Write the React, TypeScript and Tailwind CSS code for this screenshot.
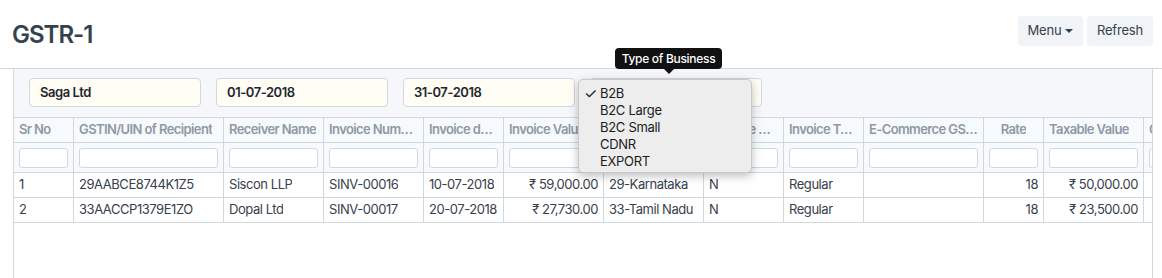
import React from "react";

type Col = { label: string; w: number; align?: "left" | "right" | "center" };

const cols: Col[] = [
  { label: "Sr No", w: 60 },
  { label: "GSTIN/UIN of Recipient", w: 150 },
  { label: "Receiver Name", w: 100 },
  { label: "Invoice Number", w: 100 },
  { label: "Invoice date", w: 80 },
  { label: "Invoice Value", w: 100, align: "right" },
  { label: "Place Of Supply", w: 100 },
  { label: "Reverse Charge", w: 80 },
  { label: "Invoice Type", w: 80 },
  { label: "E-Commerce GSTIN", w: 120 },
  { label: "Rate", w: 60, align: "right" },
  { label: "Taxable Value", w: 100, align: "right" },
  { label: "Cess Amount", w: 100, align: "right" },
];

const rows: string[][] = [
  ["1", "29AABCE8744K1Z5", "Siscon LLP", "SINV-00016", "10-07-2018", "₹ 59,000.00", "29-Karnataka", "N", "Regular", "", "18", "₹ 50,000.00", ""],
  ["2", "33AACCP1379E1ZO", "Dopal Ltd", "SINV-00017", "20-07-2018", "₹ 27,730.00", "33-Tamil Nadu", "N", "Regular", "", "18", "₹ 23,500.00", ""],
];

export default function App() {
  return (
    <div className="relative w-[1162px] h-[278px] overflow-hidden bg-white font-[Inter,sans-serif] text-[#36414c] tracking-[-0.45px]">
      {/* Page head */}
      <div className="flex items-center justify-between h-[69px] pl-[12px] pr-[9px] border-b border-[#d1d8dd]">
        <h1 className="text-[24px] font-semibold tracking-[-1px] leading-none mt-[2px]">GSTR-1</h1>
        <div className="flex gap-[4px] mb-[6px] tracking-[-0.2px]">
          <button className="flex items-center gap-[4px] h-[30px] w-[65px] justify-center rounded-[4px] bg-[#f0f4f7] text-[13px]">
            Menu
            <span className="w-0 h-0 border-l-[4px] border-r-[4px] border-t-[4px] border-l-transparent border-r-transparent border-t-[#36414c]" />
          </button>
          <button className="h-[30px] w-[66px] rounded-[4px] bg-[#f0f4f7] text-[13px]">Refresh</button>
        </div>
      </div>

      {/* Body */}
      <div className="ml-[13px] w-[1140px] h-[209px] border-l border-r border-[#d1d8dd] overflow-hidden">
        <div className="flex gap-[15px] h-[49px] pl-[15px] pt-[9px] bg-[#f5f7fa] border-b border-[#d1d8dd]">
          {["Saga Ltd", "01-07-2018", "31-07-2018", ""].map((v, i) => (
            <div
              key={i}
              className="w-[172px] h-[29px] flex items-center px-[10px] rounded-[4px] border border-[#d1d8dd] bg-[#fffdf4] text-[13px] font-semibold text-[#1f272e]"
            >
              {v}
            </div>
          ))}
        </div>

        <div className="w-max text-[13px]">
          <div className="flex h-[25px] bg-[#f7fafc] border-b border-[#d1d8dd]">
            {cols.map((c, i) => (
              <div
                key={i}
                style={{ width: c.w }}
                className={`shrink-0 flex items-center px-[5px] border-r border-[#d1d8dd] font-semibold text-[#8d99a6] tracking-[-0.6px] ${c.label === "Rate" ? "justify-center" : ""}`}
              >
                <span className="truncate">{c.label}</span>
              </div>
            ))}
          </div>
          <div className="flex h-[30px] bg-[#f7fafc] border-b border-[#d1d8dd]">
            {cols.map((c, i) => (
              <div key={i} style={{ width: c.w }} className="shrink-0 flex items-center pl-[5px] pr-[5px] border-r border-[#d1d8dd]">
                <div className="w-full h-[20px] rounded-[3px] border border-[#d1d8dd] bg-white" />
              </div>
            ))}
          </div>
          {rows.map((r, ri) => (
            <div key={ri} className="flex h-[25px] bg-white border-b border-[#d1d8dd]">
              {cols.map((c, i) => (
                <div
                  key={i}
                  style={{ width: c.w }}
                  className={`shrink-0 flex items-center px-[5px] border-r border-[#d1d8dd] text-[#36414c] ${c.align === "right" ? "justify-end" : ""}`}
                >
                  <span className="truncate">{r[i]}</span>
                </div>
              ))}
            </div>
          ))}
        </div>
      </div>

      {/* Tooltip */}
      <div className="absolute left-[615px] top-[48px] w-[107px] h-[21px] rounded-[4px] bg-[#111] text-white text-[12px] font-medium flex items-center justify-center tracking-[-0.3px]">
        Type of Business
        <span className="absolute left-1/2 -translate-x-1/2 top-[21px] w-0 h-0 border-l-[5px] border-r-[5px] border-t-[5px] border-l-transparent border-r-transparent border-t-[#111]" />
      </div>

      {/* Dropdown menu */}
      <div className="absolute left-[578px] top-[79px] w-[174px] h-[94px] rounded-[5px] bg-[#ededed] border border-[#c8c8c8] shadow-[0_3px_10px_rgba(0,0,0,0.25)] pt-[5px] text-[13px] text-[#1c1c1c] tracking-[-0.3px]">
        {["B2B", "B2C Large", "B2C Small", "CDNR", "EXPORT"].map((t, i) => (
          <div key={t} className="flex items-center h-[17px]">
            <span className="w-[21px] pl-[5px] text-[15px] leading-none">{i === 0 ? "✓" : ""}</span>
            <span>{t}</span>
          </div>
        ))}
      </div>
    </div>
  );
}
